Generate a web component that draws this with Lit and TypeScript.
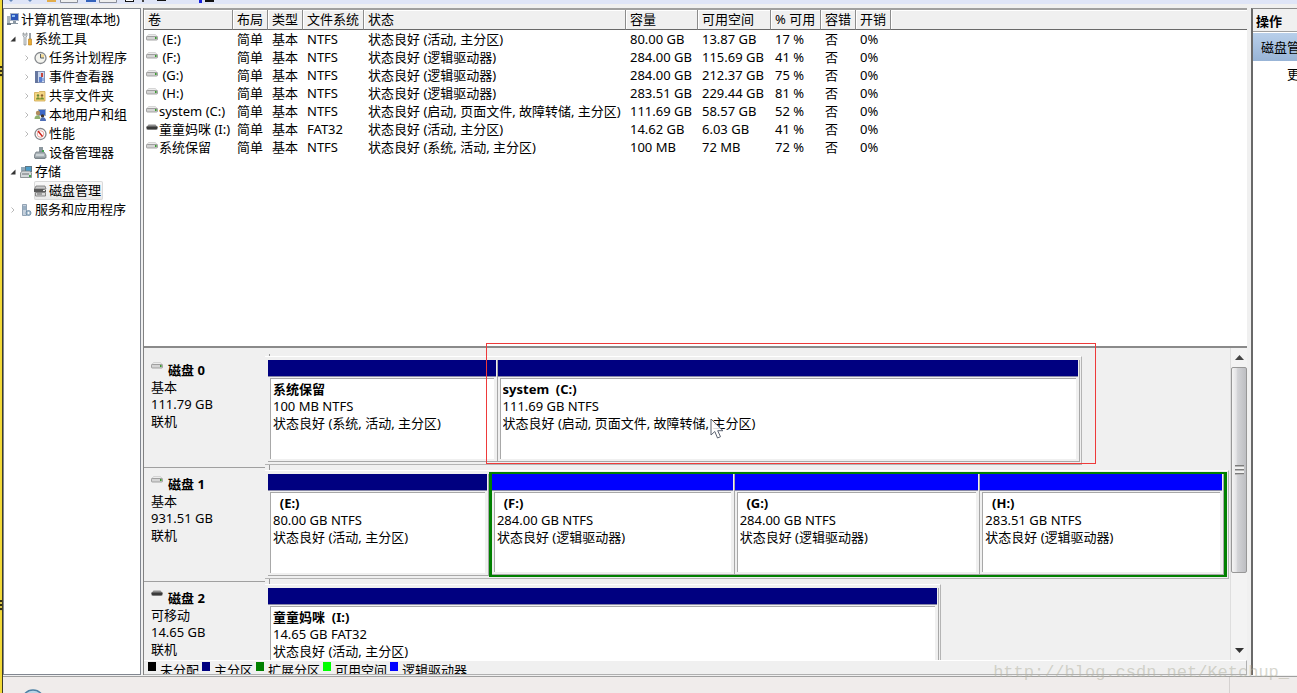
import { LitElement, html, css, svg, nothing } from "lit";
import { customElement } from "lit/decorators.js";
import { classMap } from "lit/directives/class-map.js";

interface TreeNode { label: string; level: number; icon: string; arrow?: "open" | "closed"; selected?: boolean }
interface Volume { name: string; fs: string; status: string; size: string; free: string; pct: string; removable?: boolean }
interface Part { name: string; size: string; status: string; share: number; logical?: boolean }
interface Disk { name: string; kind: string; size: string; span: number; parts: Part[]; extended?: { share: number; parts: Part[] }; removable?: boolean }

const TREE: TreeNode[] = [
  { label: "计算机管理(本地)", level: 0, icon: "computer" },
  { label: "系统工具", level: 1, icon: "tools", arrow: "open" },
  { label: "任务计划程序", level: 2, icon: "clock", arrow: "closed" },
  { label: "事件查看器", level: 2, icon: "event", arrow: "closed" },
  { label: "共享文件夹", level: 2, icon: "folder", arrow: "closed" },
  { label: "本地用户和组", level: 2, icon: "users", arrow: "closed" },
  { label: "性能", level: 2, icon: "perf", arrow: "closed" },
  { label: "设备管理器", level: 2, icon: "device" },
  { label: "存储", level: 1, icon: "storage", arrow: "open" },
  { label: "磁盘管理", level: 2, icon: "disk", selected: true },
  { label: "服务和应用程序", level: 1, icon: "services", arrow: "closed" },
];

const VOLUMES: Volume[] = [
  { name: " (E:)", fs: "NTFS", status: "状态良好 (活动, 主分区)", size: "80.00 GB", free: "13.87 GB", pct: "17 %" },
  { name: " (F:)", fs: "NTFS", status: "状态良好 (逻辑驱动器)", size: "284.00 GB", free: "115.69 GB", pct: "41 %" },
  { name: " (G:)", fs: "NTFS", status: "状态良好 (逻辑驱动器)", size: "284.00 GB", free: "212.37 GB", pct: "75 %" },
  { name: " (H:)", fs: "NTFS", status: "状态良好 (逻辑驱动器)", size: "283.51 GB", free: "229.44 GB", pct: "81 %" },
  { name: "system (C:)", fs: "NTFS", status: "状态良好 (启动, 页面文件, 故障转储, 主分区)", size: "111.69 GB", free: "58.57 GB", pct: "52 %" },
  { name: "童童妈咪 (I:)", fs: "FAT32", status: "状态良好 (活动, 主分区)", size: "14.62 GB", free: "6.03 GB", pct: "41 %", removable: true },
  { name: "系统保留", fs: "NTFS", status: "状态良好 (系统, 活动, 主分区)", size: "100 MB", free: "72 MB", pct: "72 %" },
];

const COLUMNS = ["卷", "布局", "类型", "文件系统", "状态", "容量", "可用空间", "% 可用", "容错", "开销"];

const DISKS: Disk[] = [
  {
    name: "磁盘 0", kind: "基本", size: "111.79 GB", span: 84.7,
    parts: [
      { name: "系统保留", size: "100 MB NTFS", status: "状态良好 (系统, 活动, 主分区)", share: 229 },
      { name: "system  (C:)", size: "111.69 GB NTFS", status: "状态良好 (启动, 页面文件, 故障转储, 主分区)", share: 583 },
    ],
  },
  {
    name: "磁盘 1", kind: "基本", size: "931.51 GB", span: 99.9,
    parts: [{ name: "  (E:)", size: "80.00 GB NTFS", status: "状态良好 (活动, 主分区)", share: 222 }],
    extended: {
      share: 739,
      parts: [
        { name: "  (F:)", size: "284.00 GB NTFS", status: "状态良好 (逻辑驱动器)", share: 243, logical: true },
        { name: "  (G:)", size: "284.00 GB NTFS", status: "状态良好 (逻辑驱动器)", share: 246, logical: true },
        { name: "  (H:)", size: "283.51 GB NTFS", status: "状态良好 (逻辑驱动器)", share: 244, logical: true },
      ],
    },
  },
  {
    name: "磁盘 2", kind: "可移动", size: "14.65 GB", span: 70, removable: true,
    parts: [{ name: "童童妈咪  (I:)", size: "14.65 GB FAT32", status: "状态良好 (活动, 主分区)", share: 1 }],
  },
];

const LEGEND = [
  ["未分配", "black"], ["主分区", "navy"], ["扩展分区", "green"], ["可用空间", "lime"], ["逻辑驱动器", "blue"],
];

const GLYPHS: Record<string, unknown> = {
  computer: svg`<rect x="1" y="4" width="3" height="8" fill="#aab4bc"/><rect x="4.500" y="1.500" width="8" height="7" fill="#2c56b8" stroke="#a9b5c6"/><path d="M6 3h3v2H6z" fill="#8fc0f4"/><path d="M7 9h3v2h2v1H5v-1h2z" fill="#8b98a4"/><path d="M1 11h4v2H1z" fill="#6f7c88"/>`,
  tools: svg`<path d="M3 1v3l1 1v8h2V5l1-1V1H6v2H4V1z" fill="#dfe3e6" stroke="#85898e" stroke-width=".7"/><path d="M9 1h2v6H9z" fill="#9aa0a6"/><path d="M8.500 7h3v6h-3z" fill="#e9ac35" stroke="#b87a13" stroke-width=".6"/>`,
  clock: svg`<circle cx="6.500" cy="7" r="5.500" fill="#f3f3ee" stroke="#85888c" stroke-width="1.300"/><path d="M6.500 3v4H10V3.800z" fill="#f2d894"/><path d="M6.500 3v4H10" fill="none" stroke="#57606b"/>`,
  event: svg`<rect x="1.500" y="1.500" width="9" height="11" fill="#c9d6ee" stroke="#8492b4"/><path d="M1 1h3v12H1z" fill="#66779f"/><path d="M5 7h3v5H5z" fill="#5c7fcd"/><path d="M7 3h2v4H7z" fill="#c8463d"/><path d="M8 8h2v3H8z" fill="#8eabe2"/>`,
  folder: svg`<path d="M.5 3.500h4l1-1H11v9.500H.5z" fill="#f4d582" stroke="#cfa84f" stroke-width=".8"/><circle cx="4" cy="6.500" r="1.200" fill="#69863b"/><circle cx="8" cy="6.500" r="1.200" fill="#8a6030"/><path d="M2 10.500c0-3 4-3 4 0zM6 10.500c0-3 4-3 4 0z" fill="#76902d"/>`,
  users: svg`<rect x="4.500" y="1.500" width="7" height="6" fill="#3c68c8" stroke="#a3aebf"/><circle cx="4" cy="5" r="2.200" fill="#b18d5e"/><path d="M.5 11c0-5 6-5 6 0z" fill="#8fb070"/><circle cx="8.500" cy="8" r="1.700" fill="#42362d"/><path d="M6 13c0-5 6-5 6 0z" fill="#4e6db6"/>`,
  perf: svg`<circle cx="6.500" cy="7" r="5.500" fill="#fff" stroke="#85888c" stroke-width="1.300"/><circle cx="6.500" cy="7" r="3.300" fill="none" stroke="#e7a29c"/><path d="M4 4l4.500 5.500" stroke="#cc271f" stroke-width="1.500"/>`,
  device: svg`<path d="M5 1h4v5H5z" fill="#8d989f"/><path d="M2 6h8l2 3v3H.5V9z" fill="#a9b2b7" stroke="#727b82" stroke-width=".8"/><path d="M2 9h8" stroke="#eef2f3"/><path d="M8 4h2v2H8z" fill="#43a052"/><path d="M1 12.500h10" stroke="#7e878d"/>`,
  storage: svg`<path d="M1 2h5v4H1z" fill="#93a9b7"/><rect x="5.500" y="1.500" width="6" height="5" fill="#4b9cc9" stroke="#607784"/><path d="M.5 8L2 6h8l1.500 2v4.500H.5z" fill="#d4d8da" stroke="#777d81" stroke-width=".8"/><path d="M2 9h7" stroke="#6c7175"/><path d="M9 10h2v2H9z" fill="#41a64a"/>`,
  disk: svg`<path d="M2 2h9l1 3H.5z" fill="#c9c9c9" stroke="#777" stroke-width=".8"/><path d="M0 5h9l3 1v2H0z" fill="#5a5a5a"/><path d="M1.500 8.500h10V12h-10z" fill="#d8d8d8" stroke="#707070" stroke-width=".8"/><path d="M3 10h5" stroke="#666"/><path d="M9 6h2v1H9z" fill="#eee"/>`,
  services: svg`<path d="M2.500 1.500h4v11h-4z" fill="#c5d0dc" stroke="#7d90a5" stroke-width=".8"/><path d="M3 4h3M3 6h3" stroke="#6f8da8"/><circle cx="8.500" cy="10" r="2.500" fill="#a6bccd" stroke="#6283a0" stroke-width=".8"/><circle cx="8.500" cy="10" r=".9" fill="#fff"/>`,
};

const drive = (removable = false) => removable
  ? html`<svg class="drive" viewBox="0 0 12 7" aria-hidden="true"><path d="M2.500 .5h7L11.500 3v2.500H.5V3z" fill="#8d8d8d"/><path d="M.5 2.500h11V4l-1 1.500h-9L.5 4z" fill="#3a3a3a"/></svg>`
  : html`<svg class="drive" viewBox="0 0 12 7" aria-hidden="true"><path d="M2.500.6h7l2 2.400H.5z" fill="#f0f0f0" stroke="#bbb" stroke-width=".6"/><rect x=".5" y="2.500" width="11" height="3.500" rx=".8" fill="#d4d4d4" stroke="#909090" stroke-width=".8"/><path d="M9 3h1.600v2H9z" fill="#3c9a32"/></svg>`;

@customElement("app-root")
export class AppRoot extends LitElement {
  static styles = css`
    :host { display: flex; height: 100vh; overflow: hidden; position: relative; color: #000; background: #f0f0f0;
      font: 13px/17px "Noto Sans", "Noto Sans CJK SC", sans-serif; }
    * { box-sizing: border-box; }
    button { font: inherit; color: inherit; background: none; border: 0; padding: 0; margin: 0; text-align: left; white-space: nowrap; }
    .edge { width: 3px; flex: none; background: #f2d938; border-right: 1px solid #3c3a28; display: flex; flex-direction: column; }
    .mark { height: 11px; margin-top: 66px; background: repeating-linear-gradient(#332e10 0 2px, #d8c648 2px 4px); }
    .mark + .mark { margin-top: 523px; }
    .window { flex: 1; min-width: 0; display: flex; flex-direction: column; }
    .toolbar { height: 4px; flex: none; background: #dfe5f7; overflow: hidden; }
    .toolbar svg { display: block; }
    .main { flex: 1; min-height: 0; display: grid; grid-template-columns: 138px minmax(0, 1fr) 46px; column-gap: 2px; padding: 4px 0 1px; }
    .tree { background: #fff; border: 1px solid #828790; margin: 0; padding: 0; list-style: none; overflow: hidden; }
    .node { display: flex; align-items: center; height: 19px; }
    .level0 { padding-left: 2px; height: 20px; }
    .level1 { padding-left: 4px; }
    .level2 { padding-left: 18px; }
    .arrow { width: 10px; height: 10px; margin-right: 2px; flex: none; }
    .item { display: flex; align-items: center; gap: 1px; height: 19px; padding-right: 2px; border-radius: 2px; }
    .selected { background: linear-gradient(#fafafa, #e9e9e9); box-shadow: inset 0 0 0 1px #dadada; }
    .glyph { width: 14px; height: 14px; flex: none; }
    .center { display: flex; flex-direction: column; min-width: 0; min-height: 0; margin-right: 2px; border-left: 1px solid #828282; }
    .list { flex: 1; min-height: 0; background: #fff; border-top: 2px solid #a0a0a0; overflow: hidden; }
    table { width: 100%; table-layout: fixed; border-collapse: separate; border-spacing: 0; }
    th { height: 20px; padding: 0 0 0 4px; background: #f0f0f0; border-right: 1px solid #8c8c8c; border-bottom: 1px solid #696969; box-shadow: inset 1px 1px #fff; font-weight: 400; text-align: left; white-space: nowrap; }
    th:last-child { border-right: 0; }
    td { height: 18px; padding: 0 0 0 4px; white-space: pre; }
    td:first-child { padding-left: 2px; }
    .volume { display: flex; align-items: flex-start; gap: 1px; height: 18px; line-height: 18px; }
    .volume .drive { margin-top: 4px; }
    .drive { width: 12px; height: 7px; flex: none; }
    .c-volume { width: 89px; } .c-short { width: 35px; } .c-fs { width: 61px; } .c-status { width: 262px; }
    .c-size { width: 72px; } .c-free { width: 73px; } .c-pct { width: 50px; }
    .graph { flex: 0 0 329px; min-height: 0; display: flex; flex-direction: column; border-top: 2px solid #8a8a8a; position: relative; }
    .view { flex: 1; min-height: 0; display: grid; grid-template-columns: minmax(0, 1fr) 17px; }
    .disks { padding-top: 6px; overflow: hidden; min-height: 0; }
    .disk { height: 114px; display: grid; grid-template-columns: 121px minmax(0, 1fr); }
    .label { padding: 8px 0 0 7px; border-bottom: 1px solid #a0a0a0; }
    .label p, .body p { margin: 0; white-space: pre; overflow: hidden; }
    .title { display: flex; align-items: flex-start; gap: 5px; font-weight: 700; }
    .map { padding: 2px 0 3px; background: linear-gradient(#999, #999) 4px 0 / 1px 100% no-repeat; }
    .frame { height: 109px; display: flex; padding: 3px 1px 2px 3px; background: #f0f0f0; border: 1px solid #b4b4b4; border-top-color: #fff; border-left-width: 0; }
    .part { flex-basis: 0; min-width: 0; display: flex; flex-direction: column; border-right: 1px solid #a8a8a8; border-bottom: 1px solid #a8a8a8; }
    .bar { height: 17px; background: #000080; border-bottom: 1px solid #8888a8; margin-right: 1px; }
    .logical .bar { background: #0000ff; }
    .body { flex: 1; min-height: 0; margin: 1px 3px 2px 2px; padding: 2px 0 0 2px; background: #fff; border-top: 1px solid #a8a8a8; border-left: 1px solid #a8a8a8; }
    .name { font-weight: 700; }
    .extended { flex-basis: 0; min-width: 0; display: flex; margin: -2px 0 -1px; border: 3px solid #008000; border-width: 2px 3px; }
    .scroll { display: flex; flex-direction: column; border-left: 1px solid #dedede; background: #f3f3f3; }
    .scroll button { height: 19px; display: grid; place-items: center; }
    .scroll svg { width: 9px; height: 5px; }
    .track { flex: 1; }
    .thumb { height: 75%; border: 1px solid #979797; border-radius: 2px; background: linear-gradient(90deg, #f4f4f4, #e4e4e6 30%, #d2d3d6 40%, #bdbec2); display: grid; place-items: center; }
    .grip { width: 9px; height: 10px; background: repeating-linear-gradient(#7c7c7c 0 1px, #b8b8b8 1px 2px, #f0f0f0 2px 4px); }
    .legend { height: 15px; flex: none; margin: 0; padding: 1px 0 0 4px; display: flex; gap: 3px; list-style: none; overflow: hidden; border: 1px solid #b0b0b0; border-width: 1px 1px 1px 0; border-top-color: #fff; }
    .legend li { display: flex; gap: 4px; line-height: 17px; white-space: nowrap; }
    .swatch { width: 8px; height: 9px; flex: none; }
    .black { background: #000; } .navy { background: #000080; } .green { background: #008000; } .lime { background: #0f0; } .blue { background: #00f; }
    .actions { background: #fff; border-left: 2px solid #696969; border-top: 1px solid #8c8c8c; overflow: hidden; display: flex; flex-direction: column; min-width: 0; }
    .actions h2 { margin: 0; height: 23px; flex: none; padding: 4px 0 0 3px; font: inherit; font-weight: 700; background: #f0f0f0; border-bottom: 1px solid #a0a0a0; white-space: nowrap; }
    .group { height: 28px; flex: none; margin-top: 1px; padding-left: 8px; background: linear-gradient(#b8cfea, #98b4d6); }
    .more { height: 27px; flex: none; padding-left: 34px; }
    .status { height: 17px; flex: none; background: #f0eceb; border-top: 1px solid #a0a0a0; overflow: hidden; padding: 12px 0 0 18px; position: relative; }
    .status::after { content: ""; position: absolute; right: 67px; top: 0; height: 100%; border-left: 1px solid #d5d1d0; }
    .orb { display: block; width: 24px; height: 24px; }
    .outline { position: absolute; left: 31%; right: 13.700%; top: -5px; height: 121px; border: 1px solid #ee3a3a; }
    .cursor { position: absolute; left: 51.300%; top: 70px; width: 14px; height: 21px; }
    .watermark { position: absolute; right: 8px; bottom: 9px; font: 17px/22px "Liberation Mono", monospace; color: rgba(180, 180, 165, 0.55); }
  `;

  private node(n: TreeNode) {
    return html`<li class="node level${n.level}">
      ${n.level ? html`<svg class="arrow" viewBox="0 0 10 10" aria-hidden="true">${n.arrow === "open"
        ? svg`<path d="M7.500 2.500v5h-5z" fill="#333"/>`
        : n.arrow === "closed" ? svg`<path d="M3.500 2.500L6 5 3.500 7.500" fill="none" stroke="#b8b8b8"/>` : nothing}</svg>` : nothing}
      <button class=${classMap({ item: true, selected: !!n.selected })}>
        <svg class="glyph" viewBox="0 0 14 14" aria-hidden="true">${GLYPHS[n.icon]}</svg>${n.label}
      </button>
    </li>`;
  }

  private part(p: Part) {
    return html`<section class=${classMap({ part: true, logical: !!p.logical })} style="flex-grow:${p.share}">
      <div class="bar"></div>
      <div class="body"><p class="name">${p.name}</p><p>${p.size}</p><p>${p.status}</p></div>
    </section>`;
  }

  private disk(d: Disk) {
    return html`<article class="disk">
      <div class="label"><p class="title">${drive(d.removable)}<span>${d.name}</span></p><p>${d.kind}</p><p>${d.size}</p><p>联机</p></div>
      <div class="map"><div class="frame" style="width:${d.span}%">
        ${d.parts.map((p) => this.part(p))}
        ${d.extended ? html`<div class="extended" style="flex-grow:${d.extended.share}">${d.extended.parts.map((p) => this.part(p))}</div>` : nothing}
      </div></div>
    </article>`;
  }

  render() {
    return html`
      <div class="edge"><div class="mark"></div><div class="mark"></div></div>
      <div class="window">
        <div class="toolbar">
          <svg width="240" height="4" viewBox="3 0 240 4" aria-hidden="true">
            <path d="M9 0h4l-2 2zM28 0h4l-2 2z" fill="#6587b9"/><path d="M47 0h9v2h-9z" fill="#e2ad4b"/>
            <path d="M60.500 0v2.500h17V0M99.500 0v2.500h17V0" fill="#eee" stroke="#8b8f9a"/><path d="M86 0h10v2H86z" fill="#3463bc"/>
            <path d="M125 0h9v2h-9zM157 0h9v1h-9zM205 0h9v2h-9z" fill="#111"/><path d="M126 0h7v1h-7z" fill="#fff"/>
            <path d="M142 0h2v2h-2z" fill="#444"/><path d="M199 0h3v3h-3z" fill="#1620dc"/>
          </svg>
        </div>
        <div class="main">
          <ul class="tree">${TREE.map((n) => this.node(n))}</ul>
          <div class="center">
            <div class="list">
              <table>
                <colgroup>
                  <col class="c-volume"><col class="c-short"><col class="c-short"><col class="c-fs"><col class="c-status">
                  <col class="c-size"><col class="c-free"><col class="c-pct"><col class="c-short"><col class="c-short"><col>
                </colgroup>
                <thead><tr>${COLUMNS.map((c) => html`<th>${c}</th>`)}<th></th></tr></thead>
                <tbody>${VOLUMES.map((v) => html`<tr>
                  <td><div class="volume">${drive(v.removable)}<span>${v.name}</span></div></td><td>简单</td><td>基本</td><td>${v.fs}</td><td>${v.status}</td><td>${v.size}</td><td>${v.free}</td><td>${v.pct}</td><td>否</td><td>0%</td><td></td>
                </tr>`)}</tbody>
              </table>
            </div>
            <div class="graph">
              <div class="view">
                <div class="disks">${DISKS.map((d) => this.disk(d))}</div>
                <div class="scroll">
                  <button aria-label="向上滚动"><svg viewBox="0 0 9 5"><path d="M4.500 0L9 5H0z" fill="#444"/></svg></button>
                  <div class="track"><div class="thumb"><div class="grip"></div></div></div>
                  <button aria-label="向下滚动"><svg viewBox="0 0 9 5"><path d="M0 0h9L4.500 5z" fill="#333"/></svg></button>
                </div>
              </div>
              <ul class="legend">${LEGEND.map(([t, c]) => html`<li><span class="swatch ${c}"></span>${t}</li>`)}</ul>
              <div class="outline"></div>
              <svg class="cursor" viewBox="0 0 14 21" aria-hidden="true"><path d="M1 1v16l3.800-3.500L7.500 20l3-1.300-2.800-6H13z" fill="#fff" fill-opacity=".85" stroke="#5b6270"/></svg>
            </div>
          </div>
          <aside class="actions"><h2>操作</h2><button class="group">磁盘管理</button><button class="more">更多操作</button></aside>
        </div>
        <footer class="status"><svg class="orb" viewBox="0 0 24 24" aria-hidden="true"><circle cx="12" cy="12" r="11" fill="#b9d6e8" stroke="#4c80a4" stroke-width="1.500"/></svg></footer>
      </div>
      <div class="watermark">http://blog.csdn.net/Ketchup_</div>
    `;
  }
}
